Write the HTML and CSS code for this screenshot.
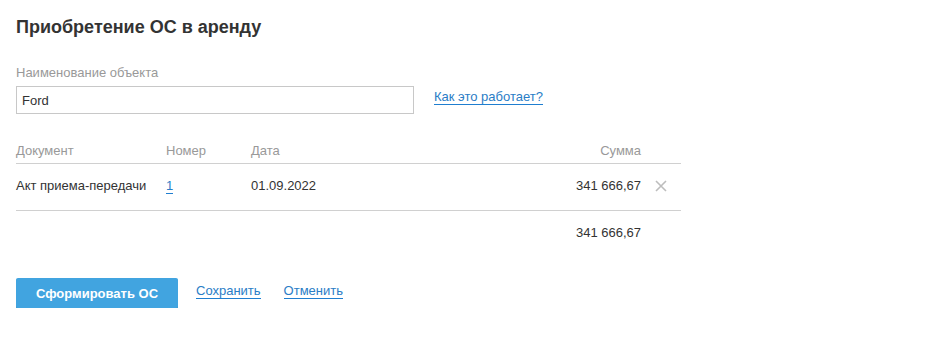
FILE: index.html
```html
<!DOCTYPE html>
<html lang="ru">
<head>
<meta charset="utf-8">
<link rel="stylesheet" href="styles.css">
</head>
<body>
<div class="page">
  <h1 class="title">Приобретение ОС в аренду</h1>
  <div class="field">
    <div class="label">Наименование объекта</div>
    <div class="field-row">
      <input class="input" type="text" value="Ford">
      <a class="link help" href="#">Как это работает?</a>
    </div>
  </div>
  <div class="table">
    <div class="row head">
      <div class="c-doc">Документ</div>
      <div class="c-num">Номер</div>
      <div class="c-date">Дата</div>
      <div class="c-sum">Сумма</div>
      <div class="c-del"></div>
    </div>
    <div class="row body">
      <div class="c-doc">Акт приема-передачи</div>
      <div class="c-num"><a class="link" href="#">1</a></div>
      <div class="c-date">01.09.2022</div>
      <div class="c-sum">341 666,67</div>
      <div class="c-del">
        <svg width="12" height="12" viewBox="0 0 12 12"><path d="M1 1L11 11M11 1L1 11" stroke="#bdbdbd" stroke-width="1.6" fill="none"/></svg>
      </div>
    </div>
    <div class="row total">
      <div class="c-doc"></div>
      <div class="c-num"></div>
      <div class="c-date"></div>
      <div class="c-sum">341 666,67</div>
      <div class="c-del"></div>
    </div>
  </div>
  <div class="actions">
    <button class="btn" type="button">Сформировать ОС</button>
    <a class="link" href="#">Сохранить</a>
    <a class="link" href="#">Отменить</a>
  </div>
</div>
</body>
</html>
```
FILE: styles.css
```css
* { box-sizing: border-box; }
body {
  margin: 0;
  background: #fff;
  font-family: "Liberation Sans", Arial, sans-serif;
  font-size: 13px;
  color: #333;
}
.page {
  padding: 15px 16px 0 16px;
}
.title {
  margin: 0;
  font-size: 18px;
  font-weight: bold;
  line-height: 24px;
  color: #333;
}
.field {
  margin-top: 26px;
}
.label {
  color: #999;
  line-height: 16px;
  margin-bottom: 5px;
}
.field-row {
  display: flex;
  align-items: center;
}
.input {
  width: 398px;
  height: 28px;
  border: 1px solid #c8c8c8;
  border-radius: 0;
  padding: 0 5px;
  font-family: inherit;
  font-size: 13px;
  color: #333;
  outline: none;
}
.link {
  color: #2a7dc6;
  text-decoration: none;
  border-bottom: 1px solid #1f7ed0;
  line-height: 14px;
}
.help {
  margin-left: 20px;
  margin-top: -5px;
}
.table {
  width: 665px;
  margin-top: 29px;
}
.row {
  display: flex;
  align-items: center;
}
.head {
  height: 21px;
  color: #999;
  border-bottom: 1px solid #d0d0d0;
  align-items: flex-start;
}
.body {
  height: 47px;
  padding-bottom: 3px;
  border-bottom: 1px solid #d0d0d0;
}
.total {
  height: 43px;
}
.c-doc { width: 150px; }
.c-num { width: 85px; }
.c-date { width: 120px; }
.c-sum { width: 270px; text-align: right; }
.c-del { width: 40px; display: flex; justify-content: center; }
.c-del svg { display: block; }
.actions {
  margin-top: 24px;
  display: flex;
  align-items: center;
}
.btn {
  width: 162px;
  height: 30px;
  background: #41a4e0;
  border: none;
  border-radius: 2px;
  color: #fff;
  font-family: inherit;
  font-size: 13px;
  font-weight: bold;
  box-shadow: 0 1px 0 #3a8fc4;
  margin-right: 18px;
}
.actions .link {
  margin-right: 23px;
  margin-top: -4px;
}
```
